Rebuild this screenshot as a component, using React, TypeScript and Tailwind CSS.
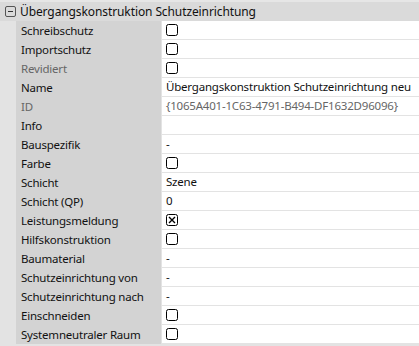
import React from "react";

type Row = { label: string; kind: "check" | "text" | "checked"; value?: string; dim?: boolean; dimValue?: boolean };

const rows: Row[] = [
  { label: "Schreibschutz", kind: "check" },
  { label: "Importschutz", kind: "check" },
  { label: "Revidiert", kind: "check", dim: true },
  { label: "Name", kind: "text", value: "Übergangskonstruktion Schutzeinrichtung neu" },
  { label: "ID", kind: "text", value: "{1065A401-1C63-4791-B494-DF1632D96096}", dim: true, dimValue: true },
  { label: "Info", kind: "text", value: "" },
  { label: "Bauspezifik", kind: "text", value: "-" },
  { label: "Farbe", kind: "check" },
  { label: "Schicht", kind: "text", value: "Szene" },
  { label: "Schicht (QP)", kind: "text", value: "0" },
  { label: "Leistungsmeldung", kind: "checked" },
  { label: "Hilfskonstruktion", kind: "check" },
  { label: "Baumaterial", kind: "text", value: "-" },
  { label: "Schutzeinrichtung von", kind: "text", value: "-" },
  { label: "Schutzeinrichtung nach", kind: "text", value: "-" },
  { label: "Einschneiden", kind: "check" },
  { label: "Systemneutraler Raum", kind: "check" },
];

function Box({ checked }: { checked?: boolean }) {
  return (
    <svg width="12" height="12" viewBox="0 0 12 12" className="block">
      <rect x="0.5" y="0.5" width="11" height="11" rx="2" fill="white" stroke="#000" strokeWidth="1" />
      {checked && <path d="M3 3 L9 9 M9 3 L3 9" stroke="#000" strokeWidth="1.4" />}
    </svg>
  );
}

export default function App() {
  return (
    <div
      className="w-[419px] h-[346px] bg-[#e3e3e3] text-[11.5px] tracking-[-0.2px] text-[#111] overflow-hidden"
      style={{ fontFamily: '"Noto Sans", "Open Sans", sans-serif' }}
    >
      <div className="h-[21px] flex items-center bg-[#dadada] border-t-2 border-[#e6e6e6]">
        <div className="w-[20px] flex justify-center pl-[1px]">
          <svg width="11" height="11" viewBox="0 0 11 11" className="block">
            <rect x="0.5" y="0.5" width="10" height="10" rx="1.5" fill="none" stroke="#555" />
            <path d="M3 5.5 H8" stroke="#333" />
          </svg>
        </div>
        <span className="leading-none text-[12px] tracking-[-0.1px]">Übergangskonstruktion Schutzeinrichtung</span>
      </div>
      {rows.map((r) => (
        <div key={r.label} className="flex h-[19px]">
          <div className="w-[16px] shrink-0" />
          <div
            className={`w-[145px] shrink-0 bg-[#d3d3d3] pl-[5px] flex items-center leading-none ${
              r.dim ? "text-[#666666]" : "text-[#111]"
            }`}
          >
            {r.label}
          </div>
          <div className="flex-1 bg-white border-b border-[#e3e3e3] flex items-center pl-[4px] ml-[1px] leading-none">
            {r.kind === "check" && <Box />}
            {r.kind === "checked" && <Box checked />}
            {r.kind === "text" && (
              <span className={r.dimValue ? "text-[#666666] whitespace-nowrap" : "whitespace-nowrap"}>{r.value}</span>
            )}
          </div>
        </div>
      ))}
    </div>
  );
}
